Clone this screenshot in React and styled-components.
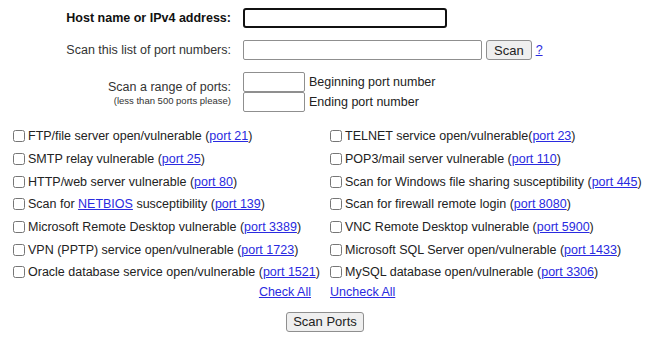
import styled, { createGlobalStyle } from "styled-components";

const GlobalStyle = createGlobalStyle`
  html, body {
    margin: 0;
    padding: 0;
    background: #ffffff;
  }
  body {
    font-family: "Liberation Sans", Arial, sans-serif;
    font-size: 12.5px;
    color: #1a1a1a;
  }
`;

const leftChecks = [
  { text: "FTP/file server open/vulnerable ", port: "port 21" },
  { text: "SMTP relay vulnerable ", port: "port 25" },
  { text: "HTTP/web server vulnerable ", port: "port 80" },
  { text: "Scan for ", link: "NETBIOS", after: " susceptibility ", port: "port 139" },
  { text: "Microsoft Remote Desktop vulnerable ", port: "port 3389" },
  { text: "VPN (PPTP) service open/vulnerable ", port: "port 1723" },
  { text: "Oracle database service open/vulnerable ", port: "port 1521" },
];

const rightChecks = [
  { text: "TELNET service open/vulnerable", port: "port 23" },
  { text: "POP3/mail server vulnerable ", port: "port 110" },
  { text: "Scan for Windows file sharing susceptibility ", port: "port 445" },
  { text: "Scan for firewall remote login ", port: "port 8080" },
  { text: "VNC Remote Desktop vulnerable ", port: "port 5900" },
  { text: "Microsoft SQL Server open/vulnerable ", port: "port 1433" },
  { text: "MySQL database open/vulnerable ", port: "port 3306" },
];

const CheckItem = ({ item }) => (
  <CheckRow>
    <Box type="checkbox" />
    <span>
      {item.text}
      {item.link && <Link href="#">{item.link}</Link>}
      {item.after}
      (<Link href="#">{item.port}</Link>)
    </span>
  </CheckRow>
);

const App = () => {
  return (
    <>
      <GlobalStyle />
      <Page>
        <Fields>
          <Label bold>Host name or IPv4 address:</Label>
          <div>
            <TextInput width={204} focused />
          </div>

          <Label>Scan this list of port numbers:</Label>
          <InlineRow>
            <TextInput width={239} />
            <Button pad={7}>Scan</Button>
            <Link href="#">?</Link>
          </InlineRow>

          <RangeLabel>
            Scan a range of ports:
            <Small>(less than 500 ports please)</Small>
          </RangeLabel>
          <RangeInputs>
            <InlineRow>
              <TextInput width={62} />
              <span>Beginning port number</span>
            </InlineRow>
            <InlineRow>
              <TextInput width={62} />
              <span>Ending port number</span>
            </InlineRow>
          </RangeInputs>
        </Fields>

        <Checks>
          {leftChecks.map((l, i) => [
            <CheckItem key={l.port} item={l} />,
            <CheckItem key={rightChecks[i].port} item={rightChecks[i]} />,
          ])}
          <AllLinks align="right">
            <Link href="#">Check All</Link>
          </AllLinks>
          <AllLinks>
            <Link href="#">Uncheck All</Link>
          </AllLinks>
        </Checks>

        <Submit>
          <Button pad={6}>Scan Ports</Button>
        </Submit>
      </Page>
    </>
  );
};

export default App;

const Page = styled.div`
  width: 650px;
  padding-top: 8px;
`;

const Fields = styled.div`
  display: grid;
  grid-template-columns: 231px 1fr;
  column-gap: 12px;
  row-gap: 12px;
  align-items: center;
`;

const Label = styled.div`
  text-align: right;
  font-weight: ${(p) => (p.bold ? "bold" : "normal")};
  color: ${(p) => (p.bold ? "#111" : "#333")};
`;

const RangeLabel = styled.div`
  text-align: right;
  color: #333;
  align-self: start;
  padding-top: 8px;
  line-height: 15px;
`;

const Small = styled.div`
  font-size: 9.5px;
  line-height: 11px;
  color: #333;
`;

const InlineRow = styled.div`
  display: flex;
  align-items: center;
  gap: 4px;
  color: #222;
`;

const RangeInputs = styled.div`
  display: flex;
  flex-direction: column;
`;

const TextInput = styled.input`
  box-sizing: border-box;
  width: ${(p) => p.width}px;
  height: 20px;
  margin: 0;
  padding: 1px 2px;
  font-family: inherit;
  font-size: 13px;
  background: #fff;
  border: ${(p) => (p.focused ? "2px solid #111" : "1px solid #8f8f8f")};
  border-radius: ${(p) => (p.focused ? "3px" : "2px")};
`;

const Button = styled.button`
  box-sizing: border-box;
  height: 20px;
  margin: 0;
  padding: 0 ${(p) => p.pad}px;
  font-family: "Liberation Sans", Arial, sans-serif;
  font-size: 13px;
  color: #222;
  background: #efefef;
  border: 1px solid #8f8f8f;
  border-radius: 3px;
`;

const Link = styled.a`
  color: #2a2ae0;
  text-decoration: underline;
  cursor: pointer;
`;

const Checks = styled.div`
  display: grid;
  grid-template-columns: 317px 1fr;
  margin-top: 13px;
  padding-left: 13px;
`;

const CheckRow = styled.label`
  display: flex;
  align-items: center;
  height: 22.7px;
  white-space: nowrap;
  color: #222;
`;

const Box = styled.input`
  width: 12px;
  height: 12px;
  margin: 0 3px 0 0;
  flex: none;
`;

const AllLinks = styled.div`
  text-align: ${(p) => p.align || "left"};
  padding-right: ${(p) => (p.align === "right" ? "19px" : "0")};
  line-height: 16px;
`;

const Submit = styled.div`
  display: flex;
  justify-content: center;
  margin-top: 12px;
`;
